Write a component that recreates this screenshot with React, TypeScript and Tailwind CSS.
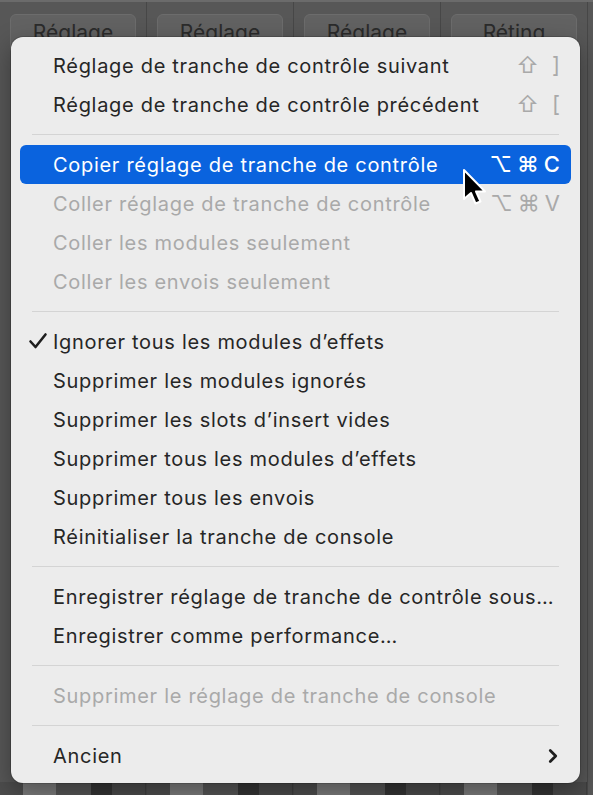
import React from 'react';
import { ChevronRight } from 'lucide-react';

type Item =
  | { kind: 'sep' }
  | {
      kind: 'item';
      label: string;
      shortcut?: string[];
      disabled?: boolean;
      active?: boolean;
      checked?: boolean;
      submenu?: boolean;
    };

const items: Item[] = [
  { kind: 'item', label: 'Réglage de tranche de contrôle suivant', shortcut: ['⇧', ']'] },
  { kind: 'item', label: 'Réglage de tranche de contrôle précédent', shortcut: ['⇧', '['] },
  { kind: 'sep' },
  { kind: 'item', label: 'Copier réglage de tranche de contrôle', shortcut: ['⌥', '⌘', 'C'], active: true },
  { kind: 'item', label: 'Coller réglage de tranche de contrôle', shortcut: ['⌥', '⌘', 'V'], disabled: true },
  { kind: 'item', label: 'Coller les modules seulement', disabled: true },
  { kind: 'item', label: 'Coller les envois seulement', disabled: true },
  { kind: 'sep' },
  { kind: 'item', label: 'Ignorer tous les modules d’effets', checked: true },
  { kind: 'item', label: 'Supprimer les modules ignorés' },
  { kind: 'item', label: 'Supprimer les slots d’insert vides' },
  { kind: 'item', label: 'Supprimer tous les modules d’effets' },
  { kind: 'item', label: 'Supprimer tous les envois' },
  { kind: 'item', label: 'Réinitialiser la tranche de console' },
  { kind: 'sep' },
  { kind: 'item', label: 'Enregistrer réglage de tranche de contrôle sous…' },
  { kind: 'item', label: 'Enregistrer comme performance…' },
  { kind: 'sep' },
  { kind: 'item', label: 'Supprimer le réglage de tranche de console', disabled: true },
  { kind: 'sep' },
  { kind: 'item', label: 'Ancien', submenu: true },
];

const strips = ['Réglage', 'Réglage', 'Réglage', 'Réting'];

// the mixer strip bits peeking out under the menu
const MeterRow = () => (
  <div className="flex h-[13px]">
    <div className="w-[23px] bg-[#4d4d4d]" />
    <div className="w-[33px] bg-[#7b7b7b]" />
    <div className="w-[36px] bg-[#555555]" />
    <div className="w-[21px] bg-[#343434]" />
    <div className="w-[34px] bg-[#4a4a4a] border-r border-[#3e3e3e]" />
  </div>
);

const Cursor = () => (
  <svg width="28" height="40" viewBox="0 0 28 40" className="absolute left-[461px] top-[168px]">
    <path
      d="M3 2 L3 31 L10 25 L14.5 35.5 L19.5 33.5 L15 23.5 L24 23.5 Z"
      fill="#000"
      stroke="#fff"
      strokeWidth="2"
      strokeLinejoin="round"
    />
  </svg>
);

const Check = () => (
  <svg width="20" height="18" viewBox="0 0 20 18" className="absolute left-[8px] top-[10px]">
    <path d="M2.5 9.5 L7.5 15 L17.5 2.5" fill="none" stroke="#1e1e1e" strokeWidth="2.6" strokeLinecap="round" strokeLinejoin="round" />
  </svg>
);

export default function App() {
  return (
    <div
      className="relative w-[593px] h-[795px] overflow-hidden bg-[#575757]"
      style={{ fontFamily: 'Inter, "Noto Sans", sans-serif' }}
    >
      {/* background: channel strips */}
      <div className="flex h-full border-t-2 border-[#6b6b6b]">
        {strips.map((s, i) => (
          <div key={i} className="flex w-[147px] flex-col border-r border-[#474747]">
            <div className="px-[10px] pt-[12px]">
              <div className="flex h-[40px] items-start justify-center rounded-[6px] border border-[#6c6c6c] bg-[#626262] pt-[2px] text-[21px] text-[#2b2b2b]">
                {s}
              </div>
            </div>
            <div className="flex-1" />
            <MeterRow />
          </div>
        ))}
      </div>

      {/* context menu */}
      <div className="absolute left-[11px] top-[37px] w-[569px] rounded-[12px] bg-[#ececec] pt-[9px] pb-[8px] shadow-[0_0_0_1px_rgba(0,0,0,0.15),0_8px_24px_rgba(0,0,0,0.35)] text-[20px] tracking-[0.7px]">
        {items.map((it, i) =>
          it.kind === 'sep' ? (
            <div key={i} className="flex h-[21px] items-center px-[21px]">
              <div className="h-px w-full bg-[#d4d4d4]" />
            </div>
          ) : (
            <div
              key={i}
              className={
                'mx-[9px] flex h-[39px] items-center rounded-[6px] pl-[33px] pr-[11px] relative ' +
                (it.active
                  ? 'bg-[#0a63de] text-white'
                  : it.disabled
                  ? 'text-[#a9a9a9]'
                  : 'text-[#262626]')
              }
            >
              {it.checked && <Check />}
              <span className="flex-1 whitespace-nowrap">{it.label}</span>
              {it.shortcut && (
                <span
                  className={
                    'flex items-center gap-[5px] whitespace-nowrap text-[22px] tracking-normal ' +
                    (it.active ? 'text-white font-medium' : 'text-[#a9a9a9]')
                  }
                >
                  {it.shortcut.map((k, j) => (
                    <span key={j} className={k === '⇧' ? 'mr-[8px]' : ''}>
                      {k}
                    </span>
                  ))}
                </span>
              )}
              {it.submenu && (
                <ChevronRight size={22} strokeWidth={3} className="mr-[-4px] text-[#1e1e1e]" />
              )}
            </div>
          )
        )}
      </div>

      <Cursor />
    </div>
  );
}
